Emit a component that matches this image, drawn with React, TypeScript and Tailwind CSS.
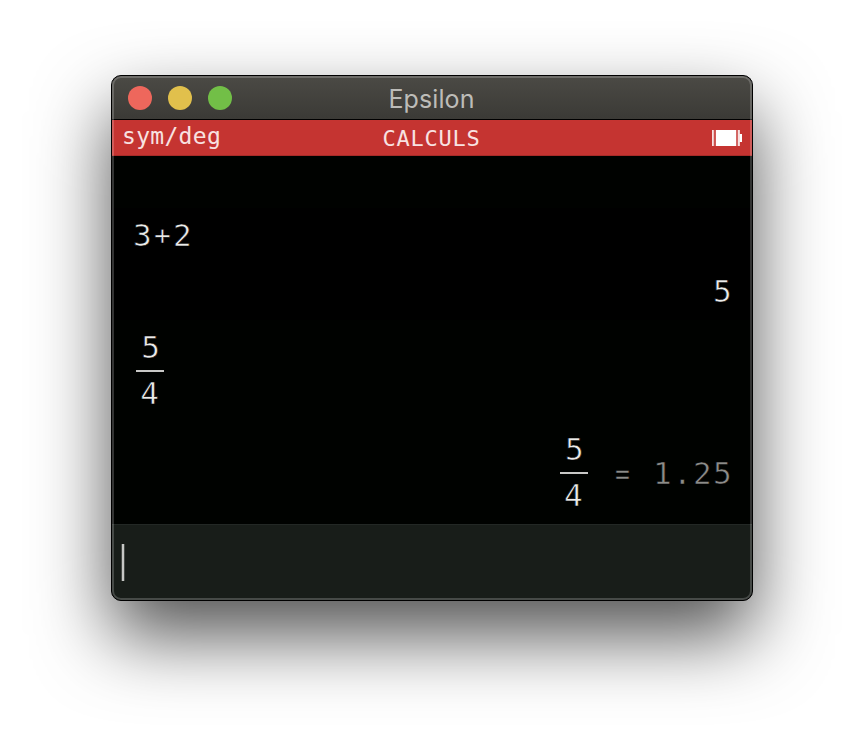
import type { ReactNode } from "react";

function Fraction({ top, bottom }: { top: string; bottom: string }) {
  return (
    <span className="flex w-7 flex-col items-center tracking-normal">
      <span className="h-[44px] pl-[1px] leading-[42px]">{top}</span>
      <span className="h-[2px] w-7 bg-[#c8c8c6]" />
      <span className="h-[44px] pr-[1px] leading-[42px]">{bottom}</span>
    </span>
  );
}

function Row({ className, children }: { className: string; children?: ReactNode }) {
  return <div className={`flex items-center ${className}`}>{children}</div>;
}

function Battery() {
  return (
    <svg width="32" height="18" viewBox="0 0 32 18" className="shrink-0">
      <rect x="1" y="1" width="1.8" height="16" fill="#fff" fillOpacity="0.85" />
      <rect x="2.8" y="1" width="1.9" height="16" fill="#fff" fillOpacity="0.15" />
      <rect x="4.9" y="1" width="20.2" height="16" fill="#fff" />
      <rect x="25.1" y="1" width="1.8" height="16" fill="#fff" fillOpacity="0.2" />
      <rect x="26.9" y="1" width="2" height="16" fill="#fff" fillOpacity="0.85" />
      <rect x="28.6" y="5" width="2.4" height="8" fill="#fff" />
    </svg>
  );
}

export default function App() {
  return (
    <div className="flex h-[748px] w-[864px] justify-center overflow-hidden bg-white pt-[75px]">
      <div className="relative flex h-[526px] w-[642px] flex-col rounded-[10px] border border-black bg-black shadow-[0_35px_74px_rgba(0,0,0,0.68)]">
        <div className="flex h-full flex-col overflow-hidden rounded-[9px]">
          <div className="grid h-[44px] shrink-0 grid-cols-3 items-center border-b border-black bg-gradient-to-b from-[#4b4a45] to-[#3b3a36] px-4">
            <div className="flex gap-4">
              <span className="size-6 rounded-full bg-[#ee675c]" />
              <span className="size-6 rounded-full bg-[#e1c04c]" />
              <span className="size-6 rounded-full bg-[#72bf47]" />
            </div>
            <div className="pr-[1px] pt-[2px] text-center font-['Inter',sans-serif] text-[25px] leading-8 tracking-[0.1px] text-[#bdbcb8]">
              Epsilon
            </div>
          </div>
          <div className="grid h-9 shrink-0 grid-cols-3 items-center border-b border-[#a82b28] bg-[#c53431] pl-[10px] pr-[9px] font-['DejaVu_Sans_Mono',monospace] text-[23px] leading-[35px] tracking-[0.3px] text-[#f8e2e1]">
            <span className="-mt-[4px]">sym/deg</span>
            <span className="pr-[2px] pt-[1px] text-center text-[22px] tracking-[0.75px]">
              CALCULS
            </span>
            <span className="flex justify-end">
              <Battery />
            </span>
          </div>
          <div className="flex flex-col font-['DejaVu_Sans_Mono',monospace] text-[31px] tracking-[1.34px] text-[#ebebe9] [-webkit-text-stroke:0.6px_#000]">
            <Row className="h-[52px] bg-[#000200]" />
            <Row className="h-[56px] bg-black pb-[2px] pl-[21px]">
              <span>3</span>
              <span className="scale-x-90 scale-y-85">+</span>
              <span>2</span>
            </Row>
            <Row className="h-[56px] justify-end bg-black pb-[2px] pr-[19px]">5</Row>
            <Row className="h-[102px] bg-[#000200] pl-6">
              <Fraction top="5" bottom="4" />
            </Row>
            <Row className="h-[102px] justify-end bg-[#000200] pr-[19px]">
              <Fraction top="5" bottom="4" />
              <span className="flex pl-[25px] whitespace-pre text-[#8c8c89]">
                <span className="scale-x-80">=</span>
                <span> 1.25</span>
              </span>
            </Row>
          </div>
          <div className="flex h-[76px] shrink-0 border-t border-[#232825] bg-[#181d19] pl-[9px] pt-[19px]">
            <span className="h-[37px] w-[4px] border-x border-[#454945] bg-[#c6c7c5]" />
          </div>
        </div>
        <div className="pointer-events-none absolute inset-0 rounded-[9px] border-2 border-white/20" />
      </div>
    </div>
  );
}
